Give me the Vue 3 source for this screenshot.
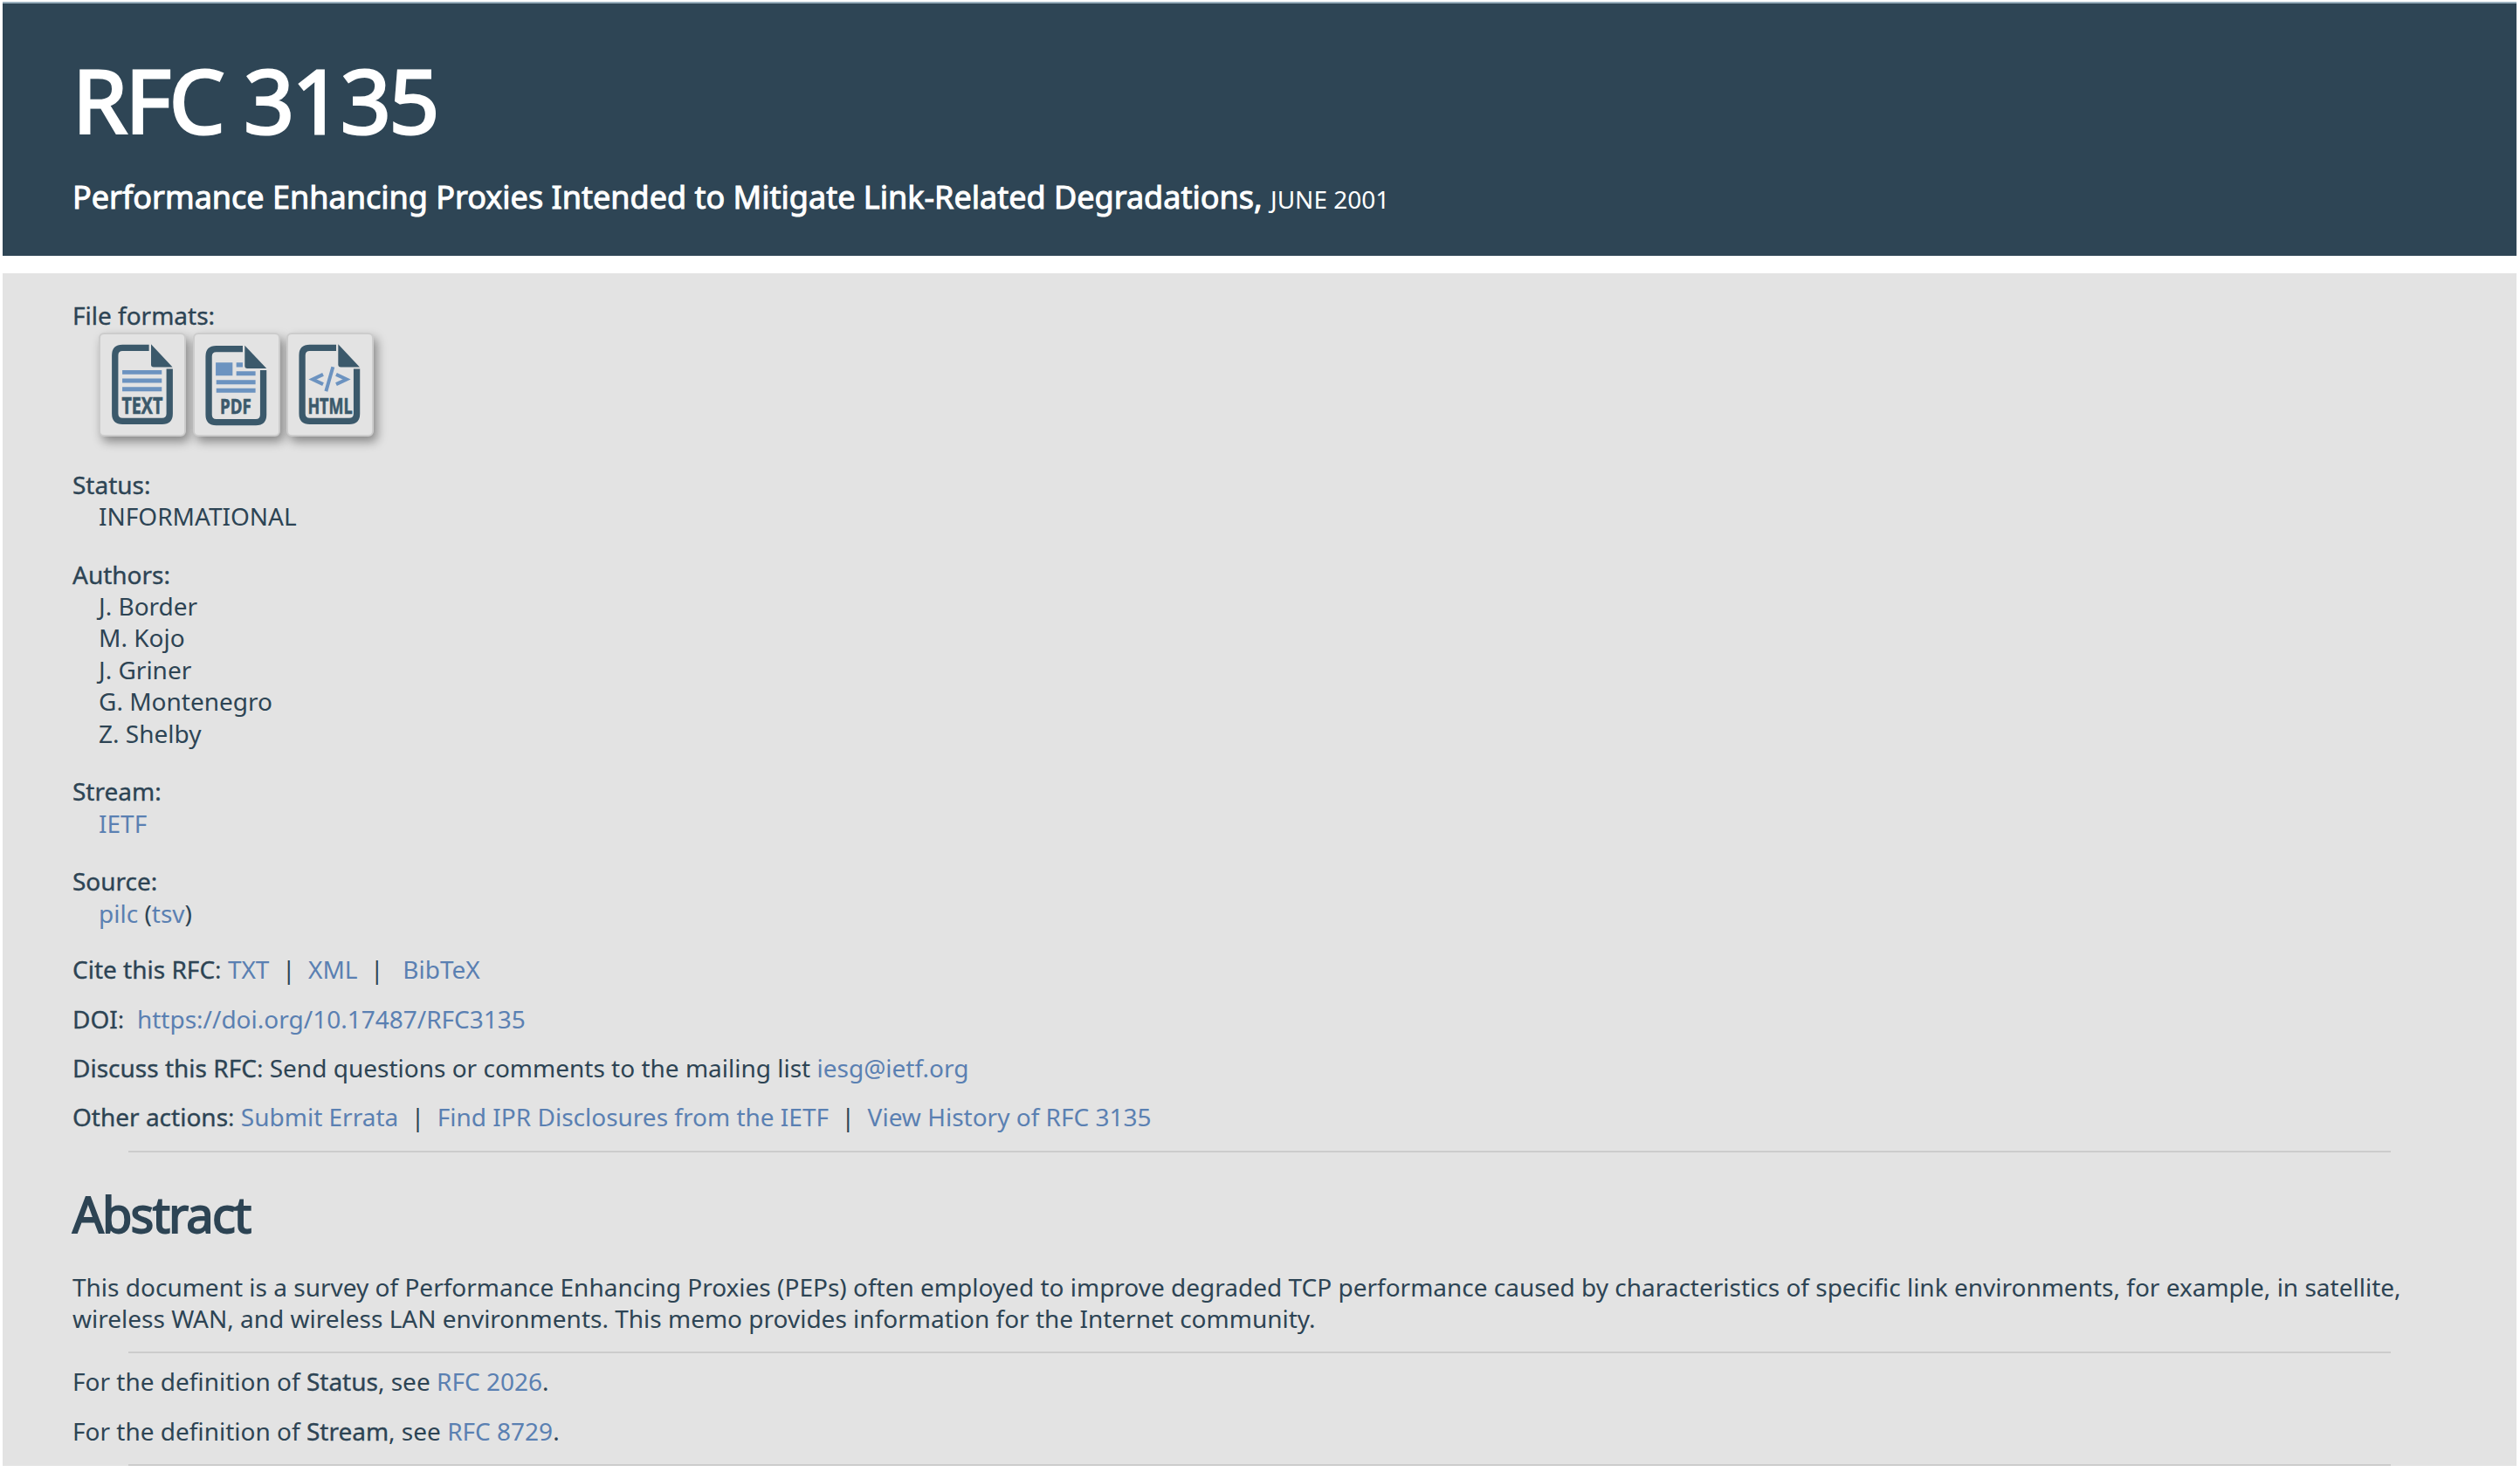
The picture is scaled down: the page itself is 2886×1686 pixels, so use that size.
<script setup>
const authors = ['J. Border', 'M. Kojo', 'J. Griner', 'G. Montenegro', 'Z. Shelby']
</script>

<template>
  <div class="page">
    <header class="banner">
      <h1>RFC 3135</h1>
      <p class="subtitle"><span class="doc-title">Performance Enhancing Proxies Intended to Mitigate Link-Related Degradations, </span><span class="date">JUNE 2001</span></p>
    </header>

    <main class="content">
      <dl class="meta">
        <dt>File formats:</dt>
        <dd class="formats">
          <a class="format">
            <svg viewBox="0 0 300 358">
              <path class="outline" d="M173 52H82Q56 52 56 78V279Q56 305 82 305H218Q244 305 244 279V125" />
              <path class="fold" d="M180 40L254 119H189Q180 119 180 110Z" />
              <path class="accent" d="M81 129h136v15H81zM81 158h136v15H81zM81 187h136v15H81z" />
              <text x="79" y="279" font-size="81" textLength="141" lengthAdjust="spacingAndGlyphs">TEXT</text>
            </svg>
          </a>
          <a class="format">
            <svg viewBox="0 0 300 358">
              <path class="outline" d="M171 56H80Q54 56 54 82V283Q54 309 80 309H216Q242 309 242 283V129" />
              <path class="fold" d="M178 44L253 123H187Q178 123 178 114Z" />
              <path class="accent" d="M78 103h58v45H78zM149 103h22v16h-22zM149 133h66v15h-66zM80 163h135v15H80zM80 192h135v15H80z" />
              <text x="93" y="279" font-size="71" textLength="107" lengthAdjust="spacingAndGlyphs">PDF</text>
            </svg>
          </a>
          <a class="format">
            <svg viewBox="0 0 300 358">
              <path class="outline" d="M171 52H80Q54 52 54 78V279Q54 305 80 305H216Q242 305 242 279V125" />
              <path class="fold" d="M178 40L252 119H187Q178 119 178 110Z" />
              <path class="code" d="M126 144L90 161L126 178M160 118L136 202M171 144L207 161L171 178" />
              <text x="73" y="279" font-size="75" textLength="154" lengthAdjust="spacingAndGlyphs">HTML</text>
            </svg>
          </a>
        </dd>
        <dt>Status:</dt>
        <dd>INFORMATIONAL</dd>
        <dt>Authors:</dt>
        <dd><div v-for="a in authors" :key="a">{{ a }}</div></dd>
        <dt>Stream:</dt>
        <dd><a>IETF</a></dd>
        <dt>Source:</dt>
        <dd><a>pilc</a> (<a>tsv</a>)</dd>
      </dl>

      <p><strong>Cite this RFC</strong>: <a>TXT</a>&nbsp; |&nbsp; <a>XML</a>&nbsp; |&nbsp; &nbsp;<a>BibTeX</a></p>
      <p><strong>DOI</strong>:&nbsp; <a>https://doi.org/10.17487/RFC3135</a></p>
      <p><strong>Discuss this RFC</strong>: Send questions or comments to the mailing list <a>iesg@ietf.org</a></p>
      <p><strong>Other actions</strong>: <a>Submit Errata</a>&nbsp; |&nbsp; <a>Find IPR Disclosures from the IETF</a>&nbsp; |&nbsp; <a>View History of RFC 3135</a></p>
      <hr>

      <h2>Abstract</h2>
      <p>This document is a survey of Performance Enhancing Proxies (PEPs) often employed to improve degraded TCP performance caused by characteristics of specific link environments, for example, in satellite, wireless WAN, and wireless LAN environments. This memo provides information for the Internet community.</p>
      <hr class="tight">

      <p>For the definition of <strong>Status</strong>, see <a>RFC 2026</a>.</p>
      <p>For the definition of <strong>Stream</strong>, see <a>RFC 8729</a>.</p>
      <hr class="last">
    </main>
  </div>
</template>

<style>
body { background: #fff; }
</style>

<style scoped>
.page {
  box-sizing: border-box;
  width: 2886px;
  height: 1686px;
  overflow: hidden;
  padding: 2px 4px 0 3px;
  background: #fff;
  color: #2d4454;
  font: 28px/36.4px "Noto Sans", sans-serif;
}
.banner {
  box-sizing: border-box;
  height: 291px;
  border-top: 2px solid #9ab0be;
  padding: 42px 80px 0;
  background: #2e4555;
  color: #fff;
}
h1 {
  margin: 0;
  font-size: 101px;
  line-height: 136px;
  font-weight: 400;
  letter-spacing: -2.3px;
  -webkit-text-stroke: 3px currentColor;
}
.subtitle {
  margin: 17px 0 0;
  line-height: 54px;
}
.doc-title {
  font-size: 36px;
  -webkit-text-stroke: 1px currentColor;
}
.content {
  box-sizing: border-box;
  height: 1366px;
  margin-top: 20px;
  padding: 30px 80px 0;
  background: #e3e3e3;
}
.meta { margin: 0 0 28.1px; }
dt, strong {
  font-weight: 400;
  -webkit-text-stroke: 0.35px currentColor;
}
dd { margin: 0 0 30.2px 30px; }
dd:last-child { margin-bottom: 0; }
.formats {
  display: flex;
  gap: 7.5px;
  height: 119px;
  margin: 1.6px 0 36.6px 30px;
}
.format {
  box-sizing: border-box;
  width: 100px;
  height: 119px;
  border: 2px solid #ccc;
  border-radius: 6px;
  box-shadow: 4px 6px 12px rgba(0, 0, 0, .4);
  background: #e3e3e3;
}
.format svg {
  display: block;
  width: 100px;
  height: 119px;
  margin: -2px;
}
.outline { fill: none; stroke: #3b596b; stroke-width: 22; }
.fold { fill: #3b596b; }
.accent { fill: #6c93c0; }
.code { fill: none; stroke: #6c93c0; stroke-width: 12; }
.format text {
  fill: #3b596b;
  stroke: #3b596b;
  stroke-width: 2;
  font-family: "Open Sans", sans-serif;
  font-weight: 700;
}
p { margin: 0 0 20px; }
a { color: #5a80b2; }
hr {
  height: 2px;
  margin: 0 64px 33.5px;
  border: 0;
  background: #ccc;
}
hr.tight { margin-bottom: 14px; }
hr.last { margin-bottom: 0; }
h2 {
  margin: 0 0 27px;
  font-size: 56px;
  line-height: 75.4px;
  font-weight: 400;
  letter-spacing: -1.8px;
  -webkit-text-stroke: 1.8px currentColor;
}
</style>
